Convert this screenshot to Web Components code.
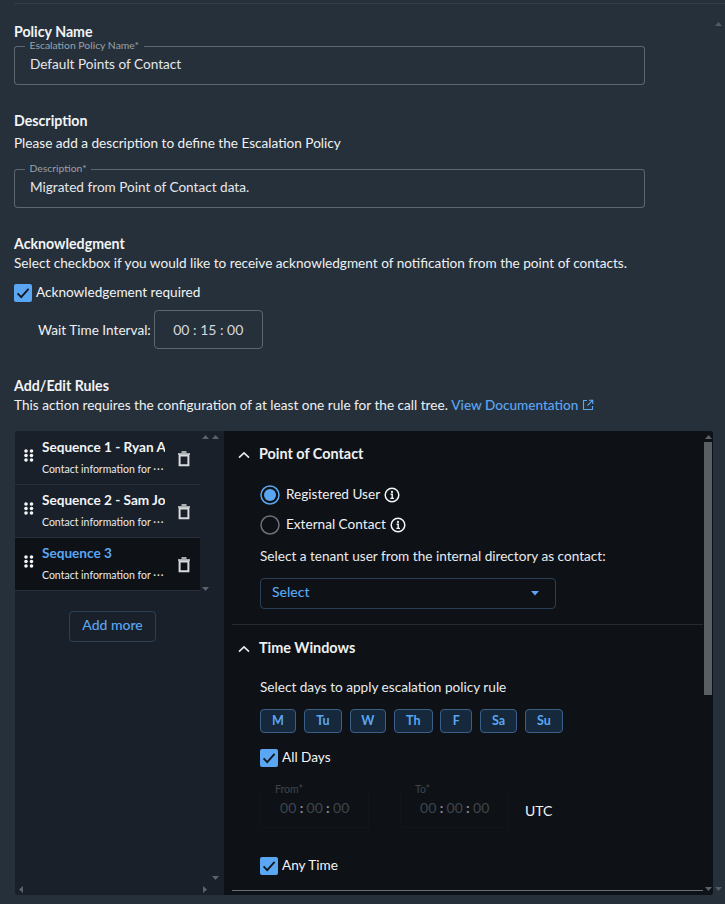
<!DOCTYPE html>
<html lang="en">
<head>
<meta charset="utf-8">
<title>Escalation Policy</title>
<style>
  html, body { margin: 0; padding: 0; background: #26303a; }
  body { width: 725px; height: 904px; overflow: hidden; font-family: Lato, "Liberation Sans", sans-serif; color: #f2f4f6; }
</style>
</head>
<body>
<policy-page></policy-page>

<script>
// outlined text field with the label sitting on the border
class OutlinedField extends HTMLElement {
  constructor() {
    super();
    this.attachShadow({ mode: 'open' });
    this.shadowRoot.innerHTML = `
      <style>
        :host { display: block; width: 631px; height: 39px; box-sizing: border-box; position: relative;
          border: 1px solid #5d6670; border-top: 0; border-radius: 4px; }
        fieldset { position: absolute; inset: 0 -1px 0 -1px; margin: 0; padding: 0 0 0 11px; border: 0; border-top: 1px solid #5d6670; border-radius: 4px; top: 0; height: 6px; pointer-events: none; }
        legend { padding: 0 4.5px; font-size: 10.4px; line-height: 0; height: 0; color: #98a1ab; }
        legend span { position: relative; top: -2px; }
        .val { padding: 9px 15px 0; font-size: 13.6px; line-height: 18px; color: #e4e7ea; }
      </style>
      <fieldset><legend><span>${this.getAttribute('label')}</span></legend></fieldset>
      <div class="val"><slot></slot></div>`;
  }
}
customElements.define('outlined-field', OutlinedField);

class CheckBox extends HTMLElement {
  constructor() {
    super();
    this.attachShadow({ mode: 'open' });
    this.shadowRoot.innerHTML = `
      <style>
        :host { display: flex; align-items: center; gap: 4px; font-size: 13.6px; line-height: 18px; color: #f2f4f6; }
        svg { display: block; width: 18px; height: 18px; flex: none; }
        span { margin-bottom: 2px; }
      </style>
      <svg viewBox="0 0 18 18"><rect width="18" height="18" rx="2" fill="#5ba6f2"/><path d="M3.6 9.4 7.2 13.2 14.6 4.8" fill="none" stroke="#10161d" stroke-width="1.8"/></svg>
      <span><slot></slot></span>`;
  }
}
customElements.define('check-box', CheckBox);

class SeqItem extends HTMLElement {
  constructor() {
    super();
    this.attachShadow({ mode: 'open' });
    const dots = [[1,1],[6.5,1],[1,5.5],[6.5,5.5],[1,10],[6.5,10]].map(p =>
      `<circle cx="${p[0]+1}" cy="${p[1]+1}" r="1.8"/>`).join('');
    this.shadowRoot.innerHTML = `
      <style>
        :host { display: flex; box-sizing: border-box; width: 185px; height: 53px; align-items: center; border-bottom: 1px solid #26303a; }
        :host([active]) { background: #0e1217; }
        .grip { width: 10px; height: 14px; margin: 0 0 5px 9px; fill: #f4f6f8; flex: none; }
        .text { width: 123px; margin-left: 8px; overflow: hidden; white-space: nowrap; align-self: flex-start; }
        .t { font-size: 13.6px; font-weight: 700; line-height: 18px; margin-top: 6px; color: #f2f4f6; }
        :host([active]) .t { color: #5ba6f2; font-weight: 700; }
        .s { font-size: 10.5px; line-height: 14px; margin-top: 6px; color: #e8ebee; letter-spacing: 0; }
        .s i { font-style: normal; letter-spacing: 1px; }
        .trash { width: 14px; height: 16px; margin: 2px 0 0 12px; flex: none; }
      </style>
      <svg class="grip" viewBox="0 0 10 14">${dots}</svg>
      <div class="text"><div class="t"><slot></slot></div><div class="s">Contact information for <i>···</i></div></div>
      <svg class="trash" viewBox="0 0 14 16"><path d="M4.5 1h5M1 3h12" stroke="#d8dbde" stroke-width="1.6" fill="none"/><path d="M2.6 4.6h8.8v9.6h-8.8z" stroke="#d8dbde" stroke-width="2" fill="none"/></svg>`;
  }
}
customElements.define('seq-item', SeqItem);

class AccordionHead extends HTMLElement {
  constructor() {
    super();
    this.attachShadow({ mode: 'open' });
    this.shadowRoot.innerHTML = `
      <style>
        :host { display: flex; align-items: center; gap: 9px; padding-left: 14px; font-size: 14.4px; font-weight: 700; line-height: 18px; color: #eef0f2; }
        svg { width: 12px; height: 8px; display: block; margin-top: 2px; }
      </style>
      <svg viewBox="0 0 12 8"><path d="M1 6.6 6 1.8 11 6.6" fill="none" stroke="#e8ebee" stroke-width="1.6"/></svg>
      <slot></slot>`;
  }
}
customElements.define('accordion-head', AccordionHead);

class RadioRow extends HTMLElement {
  constructor() {
    super();
    this.attachShadow({ mode: 'open' });
    const on = this.hasAttribute('checked');
    this.shadowRoot.innerHTML = `
      <style>
        :host { display: flex; align-items: center; font-size: 13.6px; line-height: 18px; color: #eef0f2; height: 20px; }
        .r { width: 20px; height: 20px; display: block; flex: none; margin-right: 6px; }
        .i { width: 16px; height: 16px; display: block; margin-left: 4px; }
        span { margin-bottom: 2px; }
      </style>
      <svg class="r" viewBox="0 0 20 20">
        <circle cx="10" cy="10" r="9" fill="none" stroke="${on ? '#5ba6f2' : '#6d7278'}" stroke-width="1.5"/>
        ${on ? '<circle cx="10" cy="10" r="6" fill="#5ba6f2"/>' : ''}
      </svg>
      <span><slot></slot></span>
      <svg class="i" viewBox="0 0 16 16"><circle cx="8" cy="8" r="6.8" fill="none" stroke="#f4f6f8" stroke-width="1.5"/><path d="M6.6 7.2H8.2V11.4M6.4 11.4H10" fill="none" stroke="#f4f6f8" stroke-width="1.4"/><circle cx="8" cy="4.9" r="1.1" fill="#f4f6f8"/></svg>`;
  }
}
customElements.define('radio-row', RadioRow);

class DayChip extends HTMLElement {
  constructor() {
    super();
    this.attachShadow({ mode: 'open' });
    this.shadowRoot.innerHTML = `
      <style>
        :host { display: flex; box-sizing: border-box; height: 24px; align-items: center; justify-content: center;
          background: #15283c; border: 1px solid #3a6088; border-radius: 4px; font-size: 12.5px; font-weight: 700; color: #5ba6f2; }
      </style>
      <slot></slot>`;
  }
}
customElements.define('day-chip', DayChip);

class TimeField extends HTMLElement {
  constructor() {
    super();
    this.attachShadow({ mode: 'open' });
    this.shadowRoot.innerHTML = `
      <style>
        :host { display: block; box-sizing: border-box; width: 109px; height: 36px; position: relative;
          border: 1px solid #12161b; border-top-color: #0f1419; }
        .l { position: absolute; left: 14px; top: -11px; font-size: 10.5px; line-height: 14px; color: #3f454c; background: #0e1217; padding-right: 4px; }
        .v { display: flex; gap: 3px; padding: 6px 0 0 19px; font-size: 14px; line-height: 18px; color: #3f454c; letter-spacing: .2px; }
        b { font-weight: 700; color: #8b9096; }
      </style>
      <div class="l">${this.getAttribute('label')}</div>
      <div class="v">00<b>:</b>00<b>:</b>00</div>`;
  }
}
customElements.define('time-field', TimeField);

class ArrowMark extends HTMLElement {
  constructor() {
    super();
    this.attachShadow({ mode: 'open' });
    const paths = { up: 'M0 5 3.5 1 7 5z', down: 'M0 1 3.5 5 7 1z', left: 'M5 0 1 3.5 5 7z', right: 'M1 0 5 3.5 1 7z' };
    this.shadowRoot.innerHTML = `
      <style>:host { position: absolute; display: block; width: 7px; height: 7px; } svg { display: block; }</style>
      <svg width="7" height="7" viewBox="0 0 7 7"><path d="${paths[this.getAttribute('dir')]}" fill="${this.getAttribute('color') || '#5c6269'}"/></svg>`;
  }
}
customElements.define('arrow-mark', ArrowMark);

class RulesPanel extends HTMLElement {
  constructor() {
    super();
    this.attachShadow({ mode: 'open' });
    this.shadowRoot.innerHTML = `
      <style>
        :host { display: grid; grid-template-columns: 209px 489px; width: 698px; height: 464px; position: relative; border-radius: 3px; overflow: hidden; }
        .left { background: #19202a; box-sizing: border-box; padding-top: 1px; }
        .add { display: block; box-sizing: border-box; width: 87px; height: 31px; margin: 20px 0 0 54px; border: 1px solid #2b4057; border-radius: 4px;
          font-size: 14px; font-weight: 500; line-height: 26px; text-align: center; color: #5ba6f2; }
        .right { background: #0e1217; box-sizing: border-box; padding-top: 14px; }
        .body1 { padding: 22px 0 0 36px; height: 137px; box-sizing: border-box; }
        radio-row + radio-row { margin-top: 10px; }
        .p { font-size: 13.6px; line-height: 18px; color: #e8ebee; }
        .pick { margin-top: 13px; width: 296px; height: 31px; box-sizing: border-box; border: 1px solid #2b4057; border-radius: 4px; display: flex; align-items: center; justify-content: space-between;
          padding: 0 16px 4px 11px; font-size: 14px; font-weight: 500; color: #5ba6f2; }
        .pick svg { display: block; margin-top: 3px; }
        .rule { height: 1px; margin: 0 10px 0 8px; background: #232a31; }
        .body2 { padding: 21px 0 0 36px; }
        .days { display: flex; gap: 7.85px; margin-top: 13px; }
        .times { display: flex; margin-top: 24px; align-items: center; }
        .times time-field + time-field { margin-left: 31px; }
        .utc { font-size: 14px; margin-left: 16px; padding-top: 2px; color: #f2f4f6; }
        .bottom { position: absolute; left: 217px; right: 10px; top: 459px; height: 1px; background: #6a6f75; }
        .thumb { position: absolute; left: 689px; top: 11px; width: 8px; height: 253px; background: #5a5f64; }
      </style>
      <div class="left">
        <seq-item>Sequence 1 - Ryan Adams</seq-item>
        <seq-item>Sequence 2 - Sam Jones</seq-item>
        <seq-item active>Sequence 3</seq-item>
        <div class="add">Add more</div>
      </div>
      <div class="right">
        <accordion-head>Point of Contact</accordion-head>
        <div class="body1">
          <radio-row checked>Registered User</radio-row>
          <radio-row>External Contact</radio-row>
          <div class="p" style="margin-top:12px">Select a tenant user from the internal directory as contact:</div>
          <div class="pick">Select<svg width="8" height="5" viewBox="0 0 8 5"><path d="M0 0h8L4 4.5z" fill="#5ba6f2"/></svg></div>
        </div>
        <div class="rule" style="margin-top:24px"></div>
        <div style="height:14px"></div>
        <accordion-head>Time Windows</accordion-head>
        <div class="body2">
          <div class="p">Select days to apply escalation policy rule</div>
          <div class="days">
            <day-chip style="width:36px">M</day-chip>
            <day-chip style="width:38px">Tu</day-chip>
            <day-chip style="width:36.5px">W</day-chip>
            <day-chip style="width:38.5px">Th</day-chip>
            <day-chip style="width:32px">F</day-chip>
            <day-chip style="width:36.5px">Sa</day-chip>
            <day-chip style="width:38.5px">Su</day-chip>
          </div>
          <check-box style="margin-top:15px">All Days</check-box>
          <div class="times">
            <time-field label="From*"></time-field>
            <time-field label="To*"></time-field>
            <span class="utc">UTC</span>
          </div>
          <check-box style="margin-top:28px">Any Time</check-box>
        </div>
      </div>
      <div class="thumb"></div>
      <div class="bottom"></div>
      <arrow-mark dir="up" style="left:187px;top:3px"></arrow-mark>
      <arrow-mark dir="up" style="left:197px;top:3px"></arrow-mark>
      <arrow-mark dir="down" style="left:187px;top:155px"></arrow-mark>
      <arrow-mark dir="down" style="left:197px;top:444px"></arrow-mark>
      <arrow-mark dir="left" style="left:3px;top:455px"></arrow-mark>
      <arrow-mark dir="right" style="left:187px;top:455px"></arrow-mark>
      <arrow-mark dir="up" style="left:690px;top:3px"></arrow-mark>
      <arrow-mark dir="down" style="left:690px;top:455px"></arrow-mark>`;
  }
}
customElements.define('rules-panel', RulesPanel);

class PolicyPage extends HTMLElement {
  constructor() {
    super();
    this.attachShadow({ mode: 'open' });
    this.shadowRoot.innerHTML = `
      <style>
        :host { display: block; position: relative; box-sizing: border-box; width: 725px; height: 904px; padding: 23px 0 0 14px; font-size: 13.6px; line-height: 18px; color: #eef0f2; }
        .topline { position: absolute; left: 14px; right: 0; top: 3px; height: 1px; background: #343d47; }
        h3 { margin: 0; font-size: 14.2px; line-height: 18px; font-weight: 700; color: #f2f4f6; }
        p { margin: 0; }
        .wait { display: flex; align-items: center; margin: 7px 0 0 24px; }
        .box { width: 109px; height: 39px; box-sizing: border-box; margin-left: 3px; border: 1px solid #5d6670; border-radius: 4px;
          display: flex; align-items: center; justify-content: center; color: #d5d9dd; font-size: 14px; }
        a { color: #5ba6f2; text-decoration: none; font-weight: 500; }
        a svg { vertical-align: -1px; margin-left: 4px; }
        rules-panel { margin: 17px 0 0 1px; }
      </style>
      <div class="topline"></div>
      <h3>Policy Name</h3>
      <outlined-field label="Escalation Policy Name*" style="margin-top:5px">Default Points of Contact</outlined-field>
      <h3 style="margin-top:27px">Description</h3>
      <p style="margin-top:4px">Please add a description to define the Escalation Policy</p>
      <outlined-field label="Description*" style="margin-top:17px">Migrated from Point of Contact data.</outlined-field>
      <h3 style="margin-top:27px">Acknowledgment</h3>
      <p style="margin-top:1px">Select checkbox if you would like to receive acknowledgment of notification from the point of contacts.</p>
      <check-box style="margin-top:11px">Acknowledgement required</check-box>
      <div class="wait">Wait Time Interval:<div class="box">00 : 15 : 00</div></div>
      <h3 style="margin-top:28px">Add/Edit Rules</h3>
      <p style="margin-top:1px">This action requires the configuration of at least one rule for the call tree. <a>View Documentation<svg width="12" height="12" viewBox="0 0 12 12"><path d="M5 1.5H1.5v9h9V7M7 1.2h3.8V5M10.6 1.4 5.5 6.5" fill="none" stroke="#5ba6f2" stroke-width="1.1"/></svg></a></p>
      <rules-panel></rules-panel>
      <arrow-mark dir="up" color="#525a63" style="left:715px;top:21px"></arrow-mark>
      <arrow-mark dir="down" color="#525a63" style="left:715px;top:886px"></arrow-mark>`;
  }
}
customElements.define('policy-page', PolicyPage);
</script>
</body>
</html>
